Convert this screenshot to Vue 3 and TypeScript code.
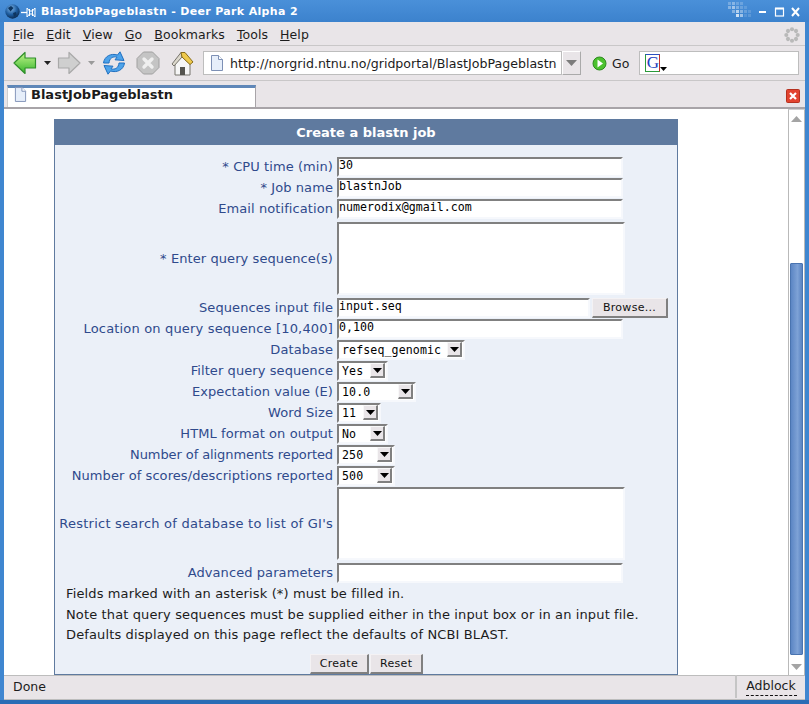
<script setup lang="ts">
interface Row { label: string; kind: 'input' | 'area' | 'file' | 'select'; value?: string; width?: number; height?: number; tracking?: number }
const rows: Row[] = [
  { label: '* CPU time (min)', kind: 'input', value: '30' },
  { label: '* Job name', kind: 'input', value: 'blastnJob' },
  { label: 'Email notification', kind: 'input', value: 'numerodix@gmail.com' },
  { label: '* Enter query sequence(s)', kind: 'area', height: 78 },
  { label: 'Sequences input file', kind: 'file', value: 'input.seq' },
  { label: 'Location on query sequence [10,400]', kind: 'input', value: '0,100', tracking: 0.17 },
  { label: 'Database', kind: 'select', value: 'refseq_genomic', width: 128 },
  { label: 'Filter query sequence', kind: 'select', value: 'Yes', width: 51 },
  { label: 'Expectation value (E)', kind: 'select', value: '10.0', width: 79 },
  { label: 'Word Size', kind: 'select', value: '11', width: 44 },
  { label: 'HTML format on output', kind: 'select', value: 'No', width: 51 },
  { label: 'Number of alignments reported', kind: 'select', value: '250', width: 58, tracking: -0.09 },
  { label: 'Number of scores/descriptions reported', kind: 'select', value: '500', width: 58 },
  { label: "Restrict search of database to list of GI's", kind: 'area', height: 75, tracking: 0.24 },
  { label: 'Advanced parameters', kind: 'input', value: '' },
]
const menus = [['F', 'ile'], ['E', 'dit'], ['V', 'iew'], ['G', 'o'], ['B', 'ookmarks'], ['T', 'ools'], ['H', 'elp']]
const pixels = [
  [0,0,.25],[4,0,.35],[8,0,.2],[12,0,.2],[0,4,.35],[4,4,.5],[8,4,.3],[12,4,.2],[16,4,.15],
  [4,8,.35],[8,8,.6],[12,8,.35],[16,8,.2],[20,8,.15],[8,12,.75],[12,12,.5],[16,12,.12],[20,12,.15],
]
const spokes = [0, 45, 90, 135, 180, 225, 270, 315]
</script>

<template>
  <div class="window">
    <header class="titlebar">
      <svg class="globe" width="38" height="20" viewBox="0 0 38 20">
        <defs><radialGradient id="gl" cx=".4" cy=".3" r=".75"><stop offset="0" stop-color="#7fb4e6"/><stop offset=".55" stop-color="#1d5c9f"/><stop offset="1" stop-color="#0a2444"/></radialGradient></defs>
        <circle cx="9.5" cy="10.5" r="7.2" fill="url(#gl)"/>
        <path d="M5 7l3-2 2.500 2-3 3.500zM10 12l3-1 .5 3-2.500 2z" fill="#0d3560"/>
        <path d="M18 11.500h6" stroke="#fff" stroke-width="1.300"/>
        <path d="M24 7l2.500 3h3l2.500-3v9l-2.500-3h-3L24 16zM26.500 8v7M29.500 8v7" fill="none" stroke="#fff" stroke-width="1"/>
      </svg>
      <span class="title">BlastJobPageblastn - Deer Park Alpha 2</span>
      <svg class="grid-deco" width="24" height="20" viewBox="0 0 24 20">
        <rect v-for="(p, i) in pixels" :key="i" :x="p[0]" :y="p[1] + 1" width="3" height="3" fill="#fff" :opacity="p[2]"/>
      </svg>
      <svg class="win-btns" width="46" height="14" viewBox="0 0 46 14">
        <path d="M4 7h7v2H4z" fill="#fff"/>
        <rect x="20.500" y="4.500" width="8" height="7.500" fill="none" stroke="#fff" stroke-width="1.200"/>
        <path d="M20 4.500h9" stroke="#fff" stroke-width="2"/>
        <path d="M37 4l7 8M44 4l-7 8" stroke="#fff" stroke-width="2"/>
      </svg>
    </header>

    <div class="chrome">
      <nav class="menubar">
        <span v-for="m in menus" :key="m[0]" class="menu"><u>{{ m[0] }}</u>{{ m[1] }}</span>
        <svg class="throbber" width="16" height="16" viewBox="0 0 18 18">
          <circle v-for="a in spokes" :key="a" cx="9" cy="2.600" r="2.300" fill="#b9b9b9" :transform="`rotate(${a} 9 9)`"/>
        </svg>
      </nav>

      <div class="toolbar">
        <svg class="ic back" width="24" height="24" viewBox="0 0 24 24">
          <defs><linearGradient id="gb" x1="0" y1="0" x2="0" y2="1"><stop offset="0" stop-color="#c4f58c"/><stop offset="1" stop-color="#35b52c"/></linearGradient></defs>
          <path d="M1 12L12 1.500V7h10.500v10H12v5.500z" fill="url(#gb)" stroke="#2f8f2a" stroke-width="1.200" stroke-linejoin="round"/>
        </svg>
        <svg class="caret" width="7" height="4" viewBox="0 0 7 4"><path d="M0 0h7L3.500 4z" fill="#222"/></svg>
        <svg class="ic fwd" width="24" height="24" viewBox="0 0 24 24">
          <path d="M23 12L12 1.500V7H1.500v10H12v5.500z" fill="#cfcfcf" stroke="#a9a9a9" stroke-width="1.200" stroke-linejoin="round"/>
        </svg>
        <svg class="caret dim" width="7" height="4" viewBox="0 0 7 4"><path d="M0 0h7L3.500 4z" fill="#9a9a9a"/></svg>
        <svg class="ic reload" width="24" height="24" viewBox="0 0 24 24">
          <path d="M1.500 12C2.500 5 9 2 15.500 4L18 .8l4 8.700-9-.7 2-2.600C11 5 7.500 7 7 12z" fill="#4da3ea" stroke="#1f6fc0"/>
          <path d="M22.500 12c-1 7-7.500 10-14 8L6 23.200l-4-8.700 9 .7-2 2.600c4 1.200 7.500-.8 8-5.800z" fill="#4da3ea" stroke="#1f6fc0"/>
        </svg>
        <svg class="ic stop" width="24" height="24" viewBox="0 0 24 24">
          <path d="M7.500 1h9L23 7.500v9L16.500 23h-9L1 16.500v-9z" fill="#c4c4c4" stroke="#a0a0a0"/>
          <path d="M8 8l8 8M16 8l-8 8" stroke="#efefef" stroke-width="3.400" stroke-linecap="round"/>
        </svg>
        <svg class="ic home" width="24" height="25" viewBox="0 0 24 25">
          <path d="M5 12l7-6 8 7v11H5z" fill="#f6f6f6" stroke="#77746c"/>
          <path d="M11 1.500L2 13l2 2 8-9z" fill="#dcd8cc" stroke="#77746c"/>
          <path d="M11 1.500h4L23 11l-3 2.500L12 6z" fill="#eec94c" stroke="#8a6d1a"/>
          <rect x="10" y="16" width="5" height="8" fill="#55544f"/>
        </svg>
        <div class="urlbox">
          <svg class="pageic" width="14" height="16" viewBox="0 0 14 16"><path d="M1.500.5h7l4 4v11h-11z" fill="#e6eefa" stroke="#7d90b5"/><path d="M8.500.5v4h4" fill="#fff" stroke="#7d90b5"/></svg>
          <span class="url">http://norgrid.ntnu.no/gridportal/BlastJobPageblastn</span>
        </div>
        <div class="urldrop"><svg width="11" height="6" viewBox="0 0 11 6"><path d="M0 0h11L5.500 6z" fill="#7c7c7c"/></svg></div>
        <svg class="goic" width="15" height="15" viewBox="0 0 15 15"><circle cx="7.500" cy="7.500" r="6.500" fill="#4cc22f" stroke="#2b8a1c"/><path d="M5.500 3.500L11 7.500 5.500 11.500z" fill="#fff"/></svg>
        <span class="go">Go</span>
        <div class="searchbox">
          <span class="gbox">G</span>
          <svg class="gcaret" width="7" height="4" viewBox="0 0 7 4"><path d="M0 0h7L3.500 4z" fill="#000"/></svg>
        </div>
      </div>

      <div class="tabbar">
        <div class="tab">
          <svg class="pageic" width="13" height="15" viewBox="0 0 14 16"><path d="M1.500.5h7l4 4v11h-11z" fill="#e6eefa" stroke="#7d90b5"/><path d="M8.500.5v4h4" fill="#fff" stroke="#7d90b5"/></svg>
          <span>BlastJobPageblastn</span>
        </div>
        <svg class="closetab" width="14" height="14" viewBox="0 0 14 14"><rect x=".5" y=".5" width="13" height="13" rx="1" fill="#e2432f" stroke="#b5301f"/><path d="M4 4l6 6M10 4l-6 6" stroke="#fff" stroke-width="2.200"/></svg>
      </div>
    </div>

    <main class="viewport">
      <div class="page">
        <section class="card">
          <h1 class="card-head">Create a blastn job</h1>
          <div class="form">
            <div v-for="r in rows" :key="r.label" class="row" :style="r.height ? { height: r.height + 'px' } : undefined">
              <label class="lbl" :style="r.tracking !== undefined ? { letterSpacing: r.tracking + 'px' } : undefined">{{ r.label }}</label>
              <div class="ctl">
                <input v-if="r.kind === 'input'" class="field" :value="r.value" readonly />
                <textarea v-else-if="r.kind === 'area'" class="area" readonly></textarea>
                <template v-else-if="r.kind === 'file'">
                  <input class="field short" :value="r.value" readonly />
                  <span class="btn browse">Browse...</span>
                </template>
                <div v-else class="sel" :style="{ width: r.width + 'px' }">
                  <span class="sel-val">{{ r.value }}</span>
                  <span class="sel-arrow"><svg width="9" height="5" viewBox="0 0 9 5"><path d="M0 0h9L4.500 5z" fill="#000"/></svg></span>
                </div>
              </div>
            </div>
            <div class="notes">
              <p>Fields marked with an asterisk (*) must be filled in.</p>
              <p>Note that query sequences must be supplied either in the input box or in an input file.</p>
              <p>Defaults displayed on this page reflect the defaults of NCBI BLAST.</p>
            </div>
            <div class="actions">
              <span class="btn">Create</span>
              <span class="btn">Reset</span>
            </div>
          </div>
        </section>
      </div>
      <aside class="scrollbar">
        <svg class="sarrow" width="11" height="6" viewBox="0 0 11 6"><path d="M0 6h11L5.500 0z" fill="#a4a4a4"/></svg>
        <div class="strack"><div class="thumb"></div></div>
        <svg class="sarrow" width="11" height="6" viewBox="0 0 11 6"><path d="M0 0h11L5.500 6z" fill="#a4a4a4"/></svg>
      </aside>
    </main>

    <footer class="status">
      <span class="done">Done</span>
      <span class="adblock">Adblock</span>
    </footer>
  </div>
</template>

<style>
html, body { margin: 0; padding: 0; }
</style>

<style scoped>
.window {
  width: 809px; height: 704px; box-sizing: border-box; overflow: hidden;
  display: flex; flex-direction: column;
  background: #3f86d0;
  border-bottom: 4px solid #2a6cb5;
  font-family: "DejaVu Sans", sans-serif;
  font-size: 12px; color: #1c1c1c;
}
.titlebar { height: 22px; flex: none; display: flex; align-items: center; background: linear-gradient(#4a90d9, #3c82cd); color: #fff; padding-right: 8px; position: relative; }
.globe { flex: none; margin-left: 3px; }
.title { margin-left: 0; font-weight: 700; font-size: 11px; letter-spacing: .33px; }
.grid-deco { margin-left: auto; }
.win-btns { margin-left: 3px; }
.chrome, .viewport, .status { margin: 0 4px; }
.chrome { flex: none; background: #e9e5e8; }
.menubar { height: 24px; display: flex; align-items: center; gap: 12px; padding: 1px 0 0 9px; border-bottom: 1px solid #c9c7c8; box-sizing: border-box; position: relative; font-size: 12.500px; letter-spacing: .08px; }
.throbber { position: absolute; right: 5px; top: 5px; }
.toolbar { height: 35px; box-sizing: border-box; display: flex; align-items: center; border-bottom: 1px solid #c9c7c8; padding-left: 9px; }
.ic, .pageic { flex: none; }
.caret { flex: none; margin: 0 0 0 7px; }
.fwd { margin-left: 6px; }
.caret.dim { margin-left: 7px; }
.reload { margin-left: 7px; }
.stop { margin-left: 10px; }
.home { margin-left: 10px; }
.urlbox { margin-left: 9px; width: 359px; height: 24px; box-sizing: border-box; background: #fff; border: 1px solid #bdbdbd; display: flex; align-items: center; padding-left: 6px; gap: 6px; overflow: hidden; }
.url { font-size: 12.600px; white-space: nowrap; }
.urldrop { width: 19px; height: 24px; margin-left: 0; box-sizing: border-box; background: #e9e5e8; border: 1px solid #fff; border-right-color: #aaa; border-bottom-color: #aaa; display: flex; align-items: center; justify-content: center; }
.goic { margin-left: 11px; flex: none; }
.go { margin-left: 5px; font-size: 12.500px; }
.searchbox { margin-left: 10px; width: 160px; height: 24px; box-sizing: border-box; background: #fff; border: 1px solid #bdbdbd; position: relative; display: flex; align-items: center; padding-left: 5px; }
.gbox { width: 15px; height: 18px; box-sizing: border-box; border: 1px solid #2a9a3a; border-top-color: #2a50c0; border-right-color: #c03030; color: #2040c0; font: 17px/16px "Liberation Serif", serif; text-align: center; }
.gcaret { margin-left: 0; margin-top: 12px; }
.tabbar { height: 28px; box-sizing: border-box; display: flex; align-items: flex-start; position: relative; border-bottom: 2px solid #a8a4a8; padding-left: 3px; padding-top: 4px; }
.tab { width: 249px; height: 22px; box-sizing: border-box; background: #fff; border-top: 3px solid #5f87b8; border-left: 1px solid #cfcfcf; border-right: 1px solid #a8a4a8; display: flex; align-items: center; gap: 4px; padding: 0 0 6px 6px; font-weight: 700; font-size: 13px; }
.closetab { position: absolute; right: 5px; top: 8px; }
.viewport { flex: 1; min-height: 0; background: #fff; display: flex; overflow: hidden; }
.page { flex: 1; min-width: 0; padding: 10px 0 0 50px; overflow: hidden; }
.card { width: 624px; box-sizing: border-box; border: 1px solid #5f7a9f; border-top: 0; background: #ebf0f8; height: 556px; overflow: hidden; }
.card-head { margin: 0; height: 26px; background: #5f7a9f; color: #fff; font-size: 13px; font-weight: 700; line-height: 27px; text-align: center; }
.form { padding-top: 11px; }
.row { display: flex; align-items: center; height: 21px; }
.row:nth-last-child(3) { margin-top: 1px; }
.lbl { width: 282px; padding-right: 4px; box-sizing: border-box; text-align: right; color: #2f4a8c; font-size: 13px; letter-spacing: .08px; white-space: nowrap; flex: none; }
.ctl { display: flex; align-items: center; gap: 2px; flex: 1; }
.field { width: 286px; height: 20px; box-sizing: border-box; border: 2px solid #808080; border-right-color: #f6f8fc; border-bottom-color: #f6f8fc; background: #fff; padding: 0 0 3px 0; font: 11.600px/15px "DejaVu Sans Mono", monospace; color: #000; outline: none; margin: 0; }
.field.short { width: 253px; }
.area { display: block; width: 288px; height: 73px; box-sizing: border-box; border: 2px solid #808080; border-right-color: #f6f8fc; border-bottom-color: #f6f8fc; background: #fff; padding: 0; margin: 0; resize: none; outline: none; }
.sel { height: 20px; box-sizing: border-box; border: 2px solid #808080; border-right-color: #f6f8fc; border-bottom-color: #f6f8fc; background: #fff; display: flex; align-items: center; justify-content: space-between; padding: 0 1px 0 3px; }
.sel-val { font: 11.600px/16px "DejaVu Sans Mono", monospace; color: #000; white-space: nowrap; letter-spacing: .1px; }
.sel-arrow { width: 15px; height: 15px; box-sizing: border-box; background: #e9e5e8; border: 1px solid #f8f8f8; border-right: 2px solid #808080; border-bottom: 2px solid #808080; display: flex; align-items: center; justify-content: center; }
.btn { display: inline-flex; align-items: center; justify-content: center; box-sizing: border-box; height: 20px; background: #e9e5e8; border: 1px solid #f4f2f4; border-right: 2px solid #808080; border-bottom: 2px solid #808080; font-size: 11px; letter-spacing: .3px; color: #111; padding: 0 9px; }
.browse { width: 76px; margin-left: 0; }
.notes { margin: 1px 0 0 11px; font-size: 13px; color: #1c1c1c; letter-spacing: .13px; }
.notes p { margin: 0; height: 20.500px; line-height: 20.500px; white-space: nowrap; }
.actions { display: flex; justify-content: center; gap: 1px; margin-top: 8px; padding-left: 1px; }
.scrollbar { width: 17px; flex: none; box-sizing: border-box; border-left: 1px solid #b9b9b9; border-right: 1px solid #b9b9b9; border-top: 1px solid #d0d0d0; background: #fff; display: flex; flex-direction: column; align-items: center; padding: 6px 0 5px; }
.strack { flex: 1; width: 100%; display: flex; flex-direction: column; justify-content: flex-end; padding: 0 0 9px; box-sizing: border-box; }
.thumb { height: 392px; margin: 0 1px; background: linear-gradient(90deg, #5c86c4, #7ea2d6 60%, #5a84c2); border: 1px solid #4a74b0; box-sizing: border-box; border-radius: 1px; }
.status { height: 25px; flex: none; box-sizing: border-box; background: #e9e5e8; border-top: 1px solid #bdbdbd; border-bottom: 1px solid #bdbdbd; display: flex; align-items: center; justify-content: space-between; padding: 0 0 2px 9px; }
.done { font-size: 12.500px; }
.adblock { width: 70px; height: calc(100% + 2px); box-sizing: border-box; border-left: 2px solid #c5c5c5; text-align: center; font-size: 12.500px; line-height: 21px; position: relative; }
.adblock::after { content: ""; position: absolute; left: 9px; right: 8px; bottom: 2px; border-bottom: 1px dashed #111; }
</style>
